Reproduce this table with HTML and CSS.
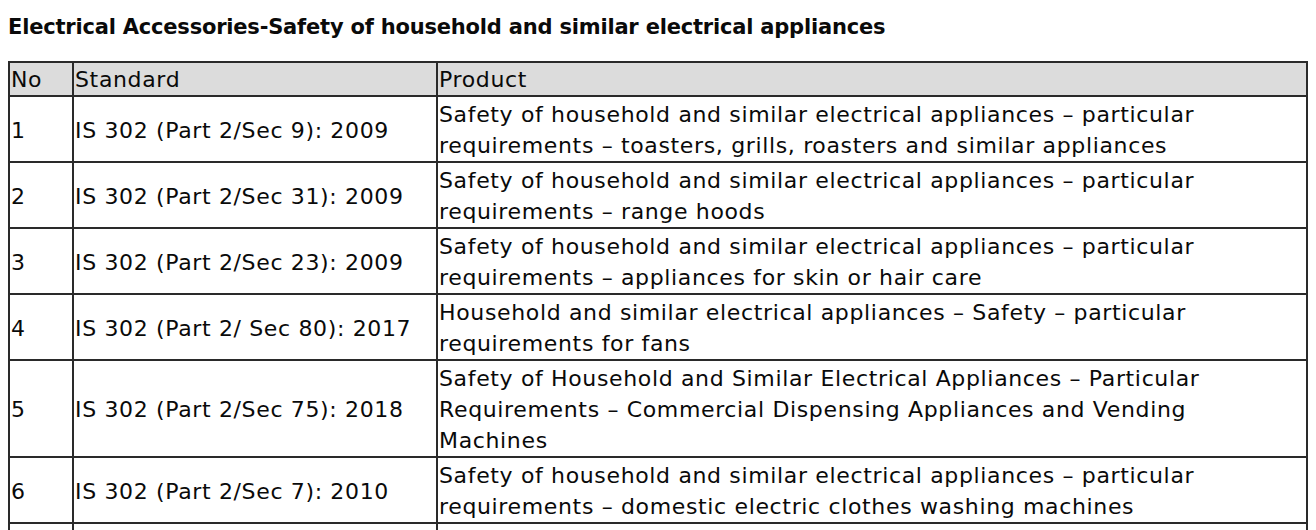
FILE: index.html
```html
<!DOCTYPE html>
<html lang="en">
<head>
<meta charset="utf-8">
<title>Electrical Accessories</title>
<link rel="stylesheet" href="styles.css">
</head>
<body>
<h1 class="title">Electrical Accessories-Safety of household and similar electrical appliances</h1>
<table class="std">
  <colgroup>
    <col class="c-no">
    <col class="c-std">
    <col class="c-prod">
  </colgroup>
  <thead>
    <tr><th>No</th><th>Standard</th><th>Product</th></tr>
  </thead>
  <tbody>
    <tr><td>1</td><td>IS 302 (Part 2/Sec 9): 2009</td><td class="prod">Safety of household and similar electrical appliances – particular<br>requirements – toasters, grills, roasters and similar appliances</td></tr>
    <tr><td>2</td><td>IS 302 (Part 2/Sec 31): 2009</td><td class="prod">Safety of household and similar electrical appliances – particular<br>requirements – range hoods</td></tr>
    <tr><td>3</td><td>IS 302 (Part 2/Sec 23): 2009</td><td class="prod">Safety of household and similar electrical appliances – particular<br>requirements – appliances for skin or hair care</td></tr>
    <tr><td>4</td><td>IS 302 (Part 2/ Sec 80): 2017</td><td class="prod">Household and similar electrical appliances – Safety – particular<br>requirements for fans</td></tr>
    <tr><td>5</td><td>IS 302 (Part 2/Sec 75): 2018</td><td class="prod">Safety of Household and Similar Electrical Appliances – Particular<br>Requirements – Commercial Dispensing Appliances and Vending<br>Machines</td></tr>
    <tr><td>6</td><td>IS 302 (Part 2/Sec 7): 2010</td><td class="prod">Safety of household and similar electrical appliances – particular<br>requirements – domestic electric clothes washing machines</td></tr>
    <tr class="empty"><td></td><td></td><td></td></tr>
  </tbody>
</table>
</body>
</html>
```
FILE: styles.css
```css
html, body {
  margin: 0;
  padding: 0;
  background: #ffffff;
  overflow: hidden;
}
body {
  padding: 0 8px;
  font-family: "DejaVu Sans", "Liberation Sans", sans-serif;
  color: #0a0a0a;
}
.title {
  margin: 0;
  padding-top: 12px;
  height: 61px;
  box-sizing: border-box;
  font-size: 21px;
  line-height: 30px;
  font-weight: bold;
  color: #0a0a0a;
  letter-spacing: -0.2px;
}
.std {
  border-collapse: collapse;
  width: 1298px;
  table-layout: fixed;
  font-size: 22px;
  line-height: 31px;
  letter-spacing: 0.65px;
}
.c-no { width: 64px; }
.c-std { width: 364px; }
.c-prod { width: 870px; }
.std th, .std td {
  border: 2px solid #2a2a2a;
  padding: 2px 1px 0;
  text-align: left;
  font-weight: normal;
  white-space: nowrap;
  overflow: hidden;
}
.std th {
  background: #dcdcdc;
  vertical-align: middle;
  line-height: 31px;
  padding: 1px 1px 0;
}
.std td {
  vertical-align: middle;
}
.std td.prod {
  vertical-align: top;
}
.std tr.empty td {
  height: 6px;
}
```
